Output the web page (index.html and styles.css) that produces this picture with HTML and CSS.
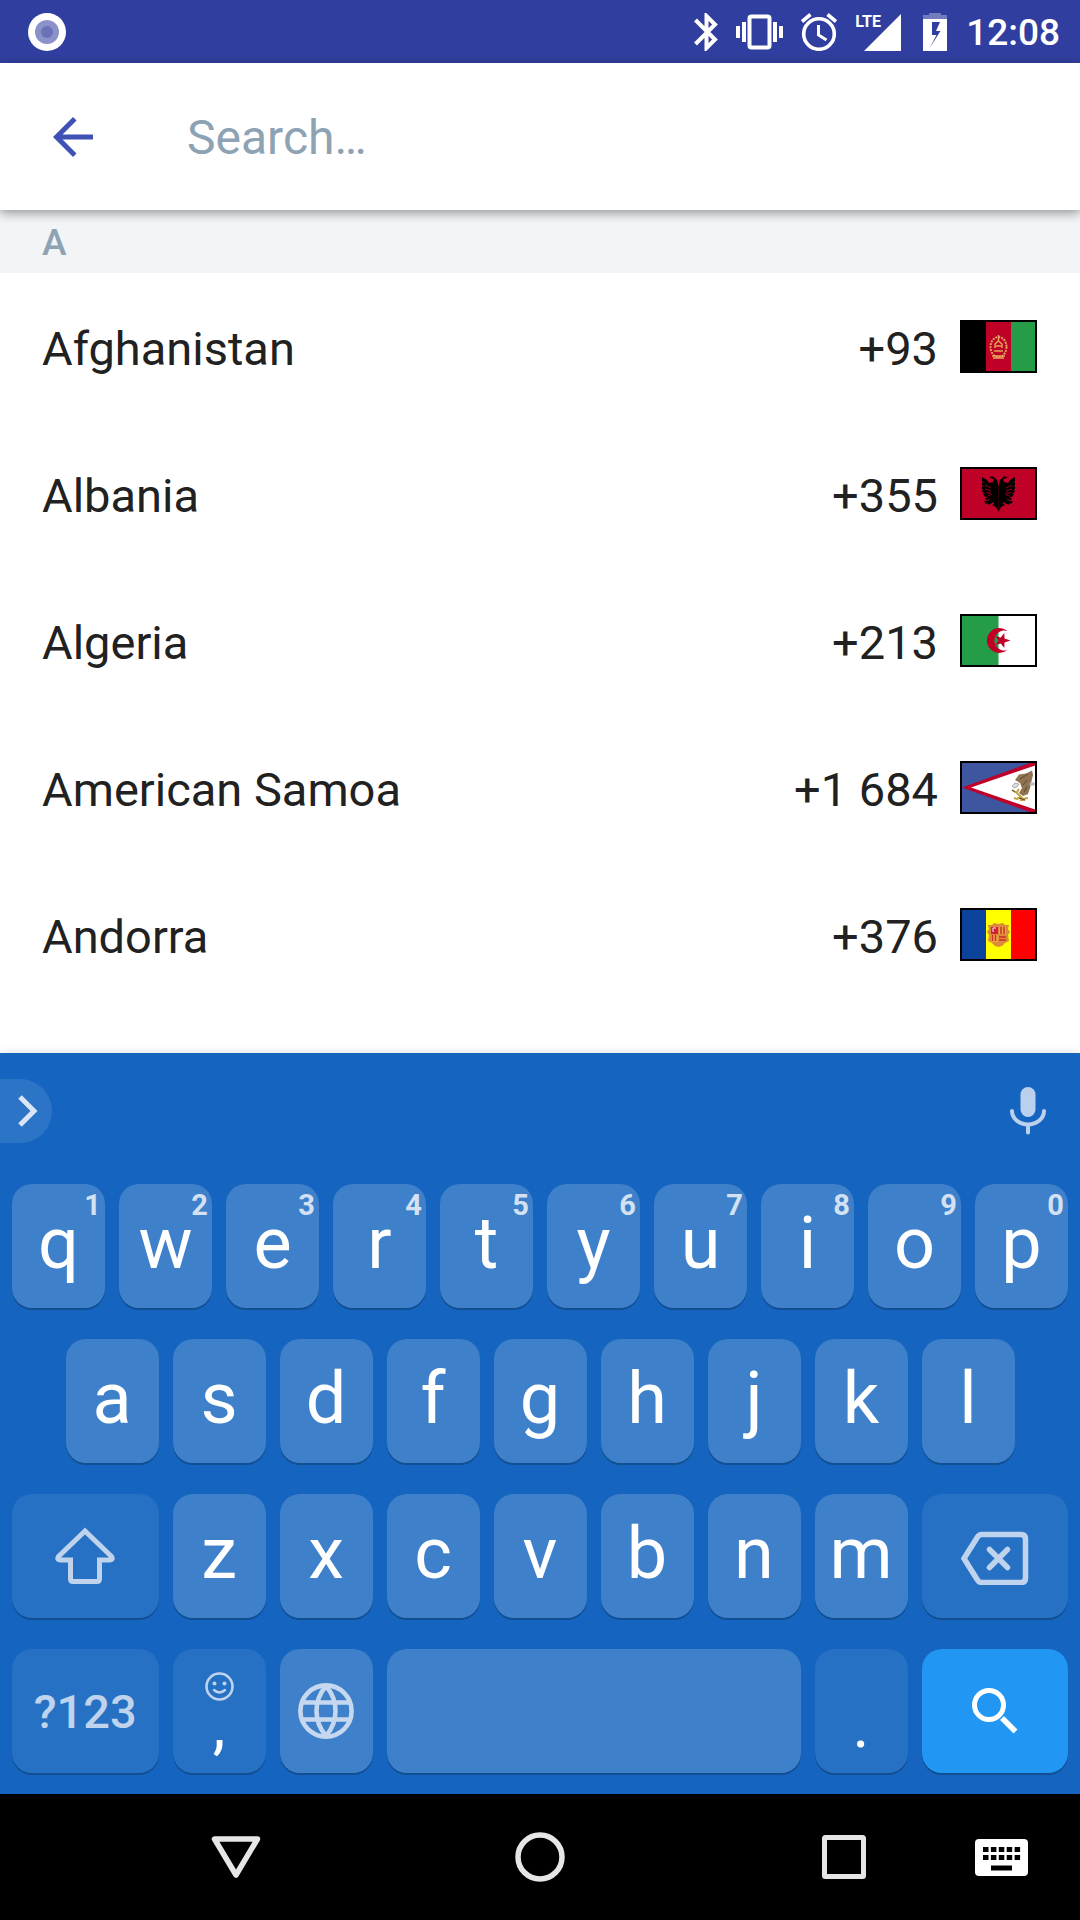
FILE: index.html
```html
<!DOCTYPE html>
<html lang="en">
<head>
<meta charset="utf-8">
<meta name="viewport" content="width=device-width, initial-scale=1">
<title>Choose a country</title>
<link rel="stylesheet" href="styles.css">
</head>
<body>
<header class="status">
  <svg class="status-app" viewBox="0 0 38 38" width="38" height="38" aria-hidden="true"><circle cx="19" cy="19" r="19" fill="#fff"/><circle cx="19" cy="19" r="12" fill="#8b92ca"/><circle cx="19" cy="19" r="6" fill="#6a72b8"/></svg>
  <div class="status-icons">
    <svg viewBox="0 0 24 38" width="24" height="38" aria-hidden="true"><path d="M1.500 7 21 26.500 12.500 35V3L21 11.500 1.500 31" fill="none" stroke="#fff" stroke-width="4"/></svg>
    <svg viewBox="0 0 47 38" width="47" height="38" fill="#fff" aria-hidden="true"><path d="M0 13h4v12H0zM6 9h4v20H6zM37 9h4v20h-4zM43 13h4v12h-4z"/><rect x="13.500" y="3.500" width="20" height="31" rx="2" fill="none" stroke="#fff" stroke-width="4"/></svg>
    <svg viewBox="0 0 36 38" width="36" height="38" fill="none" stroke="#fff" aria-hidden="true"><circle cx="18" cy="21" r="15.300" stroke-width="3.600"/><path d="M17.500 12v10l8 5" stroke-width="3"/><path d="M1 8.500 9.500 1.500M35 8.500 26.500 1.500" stroke-width="3.600"/></svg>
    <div class="signal"><span class="signal-type">LTE</span>
      <svg viewBox="0 0 46 38" width="46" height="38" aria-hidden="true"><path d="M46 1v37H9z" fill="#fff"/></svg>
    </div>
    <svg viewBox="0 0 29 38" width="29" height="38" aria-hidden="true"><path d="M4 6V2h6V0h12v2h6v4z" fill="#737cbd"/><path d="M4 6h24v32H4zM13 9v13h4.500L11 34.500 21.500 18H17l4-9z" fill="#fff" fill-rule="evenodd"/></svg>
    <time class="clock">12:08</time>
  </div>
</header>

<form class="searchbar" role="search">
  <button class="back" type="button" aria-label="Back"><svg viewBox="0 0 24 24" width="60" height="60"><path d="M20 11H7.830l5.590-5.590L12 4l-8 8 8 8 1.410-1.410L7.830 13H20z" fill="#3f51b5"/></svg></button>
  <input class="search" type="text" placeholder="Search…" aria-label="Search countries">
</form>

<main class="countries">
  <h2 class="letter">A</h2>
  <ul class="list">
    <li><button class="country" type="button"><span class="name">Afghanistan</span><span class="code">+93</span>
      <svg class="flag" viewBox="0 0 77 53"><path d="M0 0h77v53H0z"/><path d="M26 2h25v49H26z" fill="#bf0027"/><path d="M51 2h24v49H51z" fill="#259d48"/><g fill="none" stroke="#e5a25a" stroke-width="2"><ellipse cx="38.500" cy="27" rx="8" ry="10" stroke-dasharray="2 1"/><path d="M32 36h13M33 38h11M34 31h9M35 28v-4l3.500-3 3.500 3v4M38.500 15v6M36 26h5" stroke-width="1.500"/></g></svg></button></li>
    <li><button class="country" type="button"><span class="name">Albania</span><span class="code">+355</span>
      <svg class="flag" viewBox="0 0 77 53"><path d="M0 0h77v53H0z"/><path d="M2 2h73v49H2z" fill="#bf0027"/><path id="half-eagle" d="M38.500 19 37 13 33 9.500 29 10 34 12.500 33 15 29 16 27 13 22 10 22 14 25 16 22 15 22 18 25 20 22 19 22 22 25 24 22 23 23 26 26 27 23 27 25 30 28 29.500 25 32 27 33.500 31 31 28 34 24 34 26 37 28 36 28 38 31 36.500 34 35 34 37 32 38 36 40 38.500 45z"/><use href="#half-eagle" transform="matrix(-1 0 0 1 77 0)"/><path d="M25 18l6 3M25 22l6 2M26 26l5 0M28 29l4-2M52 18l-6 3M52 22l-6 2M51 26l-5 0M49 29l-4-2" stroke="#bf0027" stroke-width=".8"/></svg></button></li>
    <li><button class="country" type="button"><span class="name">Algeria</span><span class="code">+213</span>
      <svg class="flag" viewBox="0 0 77 53"><path d="M0 0h77v53H0z"/><path d="M2 2h37v49H2z" fill="#259d48"/><path d="M38.500 2H75v49H38.500z" fill="#fff"/><path d="M47.500 17A12.500 12.500 0 1 0 47.500 36A10 10 0 1 1 47.500 17z" fill="#c00028"/><path d="M50.500 26.500l-6 2-.2 5.500-3.500-4.500-5.500 1.500L38.500 26.500l-3.200-4.500 5.500 1.500 3.500-4.500 .2 5.500z" fill="#c00028"/></svg></button></li>
    <li><button class="country" type="button"><span class="name">American Samoa</span><span class="code">+1 684</span>
      <svg class="flag" viewBox="0 0 77 53"><path d="M0 0h77v53H0z"/><path d="M2 2h73v49H2z" fill="#3d569f"/><path d="M2 26.500 70 2h5v49h-5z" fill="#c00028"/><path d="M11 26.500 75 4.500v44z" fill="#fff"/><path d="M72 9.500 66 12.500 59 13.500 55 19 60 22 62 27 59 32 63 35 68 33 70 27 71.500 20 73 14z" fill="#8f7350"/><path d="M55 22l-3 3 2 2 3-1 2-3zM70 22h4v2h-4z" fill="#ddd" stroke="#aaa"/><path d="M52 29l5 3 4 4-4 2-3-1M57 31l2-3M60 35l3 3 5-1M60 39l5 0" fill="none" stroke="#c3a244" stroke-width="2"/><path d="M60 18l8-5M63 24l4-5M52 29l3 2M59 37l6 2M64 31l3-5" stroke="#55493a" fill="none"/></svg></button></li>
    <li><button class="country" type="button"><span class="name">Andorra</span><span class="code">+376</span>
      <svg class="flag" viewBox="0 0 77 53"><path d="M0 0h77v53H0z"/><path d="M2 2h24v49H2z" fill="#0b429b"/><path d="M26 2h25v49H26z" fill="#ff0"/><path d="M51 2h24v49H51z" fill="#f00"/><path d="M28 17 32 17 34 15 38.500 16 43 15 45 17 49 17 48 21 50 24 48 27 49 33 45 35 42 38 38.500 39 35 38 32 35 28 33 29 27 27 24 29 21z" fill="#dc8a3c"/><path d="M31 19h7v7h-7z" fill="#d0203a"/><path d="M39 19h7v7h-7zM31 27h7v7h-7z" fill="#eda648"/><path d="M41 19v7M44 19v7M32.500 27v6M35.500 27v6M39 29h7M39 32h7" stroke="#c92f25" stroke-width="1.500"/><path d="M33 24v-4h3" stroke="#eee" fill="none"/></svg></button></li>
  </ul>
</main>

<section class="keyboard" aria-label="Keyboard">
  <div class="strip">
    <button class="expand" type="button" aria-label="More"><svg viewBox="0 0 52 64" width="52" height="64"><path d="M20 18 34 32 20 46" fill="none" stroke="#dae6f5" stroke-width="5"/></svg></button>
    <button class="mic" type="button" aria-label="Voice input"><svg viewBox="0 0 36 48" width="36" height="48"><rect x="10.500" y="0" width="15" height="30" rx="7.500" fill="#bbd0ec"/><path d="M2 24a16 13.500 0 0 0 32 0M18 38v7.500" fill="none" stroke="#bbd0ec" stroke-width="4" stroke-linecap="round"/></svg></button>
  </div>
  <div class="keys">
    <button class="key" type="button">q<span class="hint">1</span></button>
    <button class="key" type="button">w<span class="hint">2</span></button>
    <button class="key" type="button">e<span class="hint">3</span></button>
    <button class="key" type="button">r<span class="hint">4</span></button>
    <button class="key" type="button">t<span class="hint">5</span></button>
    <button class="key" type="button">y<span class="hint">6</span></button>
    <button class="key" type="button">u<span class="hint">7</span></button>
    <button class="key" type="button">i<span class="hint">8</span></button>
    <button class="key" type="button">o<span class="hint">9</span></button>
    <button class="key" type="button">p<span class="hint">0</span></button>
    <button class="key key-indent" type="button">a</button>
    <button class="key" type="button">s</button>
    <button class="key" type="button">d</button>
    <button class="key" type="button">f</button>
    <button class="key" type="button">g</button>
    <button class="key" type="button">h</button>
    <button class="key" type="button">j</button>
    <button class="key" type="button">k</button>
    <button class="key" type="button">l</button>
    <button class="key key-wide key-dim key-icon key-newline" type="button" aria-label="Shift"><svg viewBox="0 0 60 58" width="60" height="58"><path d="M30 4 3.500 29.500Q1.500 33 5 33H15.500V52Q15.500 54.500 18 54.500H42Q44.500 54.500 44.500 52V33H55Q58.500 33 56.500 29.500z" fill="none" stroke="#bfd3ed" stroke-width="5"/></svg></button>
    <button class="key" type="button">z</button>
    <button class="key" type="button">x</button>
    <button class="key" type="button">c</button>
    <button class="key" type="button">v</button>
    <button class="key" type="button">b</button>
    <button class="key" type="button">n</button>
    <button class="key" type="button">m</button>
    <button class="key key-wide key-dim key-icon" type="button" aria-label="Backspace"><svg viewBox="0 -5 68 58" width="68" height="58"><path d="M21 2.500H60Q64.500 2.500 64.500 7V46Q64.500 50.500 60 50.500H21Q18 50.500 16.500 48L3 26.500 16.500 5Q18 2.500 21 2.500z" fill="none" stroke="#bfd3ed" stroke-width="5.500"/><path d="M28.500 17.500 46.500 35.500M46.500 17.500 28.500 35.500" stroke="#bfd3ed" stroke-width="5.500" stroke-linecap="round"/></svg></button>
    <button class="key key-wide key-dim key-mode" type="button">?123</button>
    <button class="key key-dim key-stack" type="button"><svg viewBox="0 0 29 29" width="29" height="29" aria-hidden="true"><circle cx="14.500" cy="14.500" r="13" fill="none" stroke="#bfd3ed" stroke-width="2.600"/><circle cx="9.500" cy="11.500" r="2" fill="#bfd3ed"/><circle cx="19.500" cy="11.500" r="2" fill="#bfd3ed"/><path d="M9 18q5.500 5 11 0" fill="none" stroke="#bfd3ed" stroke-width="2.400" stroke-linecap="round"/></svg><span class="mark">,</span></button>
    <button class="key key-icon" type="button" aria-label="Change language"><svg viewBox="0 0 56 56" width="56" height="56" fill="none" stroke="#c5d8ef" stroke-width="4.600"><circle cx="28" cy="28" r="25.600"/><path d="M5 19.500H51M5 36.500H51M28 3Q18.500 14 18.500 28T28 53Q37.500 42 37.500 28T28 3z"/></svg></button>
    <button class="key key-space" type="button" aria-label="Space"></button>
    <button class="key key-dim key-stack" type="button"><span class="mark">.</span></button>
    <button class="key key-wide key-icon key-go" type="button" aria-label="Search"><svg viewBox="0 0 46 46" width="46" height="46"><circle cx="17" cy="17" r="14.500" fill="none" stroke="#fff" stroke-width="5"/><path d="M30 30 43.500 43.500" stroke="#fff" stroke-width="5.500"/></svg></button>
  </div>
</section>

<nav class="navbar">
  <button class="nav nav-back" type="button" aria-label="Back"><svg viewBox="0 0 50 50" width="50" height="50"><path d="M3.500 7H46.500L25 43z" fill="none" stroke="#e6e6e6" stroke-width="5.500" stroke-linejoin="round"/></svg></button>
  <button class="nav nav-home" type="button" aria-label="Home"><svg viewBox="0 0 50 50" width="50" height="50"><circle cx="25" cy="25" r="22" fill="none" stroke="#e6e6e6" stroke-width="5.500"/></svg></button>
  <button class="nav nav-recent" type="button" aria-label="Recent apps"><svg viewBox="0 0 50 50" width="50" height="50"><rect x="5.500" y="5.500" width="39" height="39" rx="1" fill="none" stroke="#e6e6e6" stroke-width="5"/></svg></button>
  <button class="nav nav-ime" type="button" aria-label="Choose keyboard"><svg viewBox="0 0 53 37" width="53" height="37"><rect width="53" height="37" rx="4" fill="#fff"/><path d="M8 10.500H46M8 18.500H46" stroke="#000" stroke-width="5" stroke-dasharray="5.500 2.400"/><path d="M16 29H37" stroke="#000" stroke-width="5"/></svg></button>
</nav>
</body>
</html>
```
FILE: styles.css
```css
* { box-sizing: border-box; }

body {
  margin: 0;
  min-height: 100vh;
  display: flex;
  flex-direction: column;
  background: #fff;
  color: #212121;
  font-family: Roboto, "Noto Sans", sans-serif;
  font-size: 47px;
}

button, input {
  margin: 0;
  padding: 0;
  border: 0;
  background: none;
  color: inherit;
  font: inherit;
}

svg {
  display: block;
  flex-shrink: 0;
}

/* Status bar */
.status {
  display: flex;
  justify-content: space-between;
  align-items: center;
  height: 63px;
  padding: 0 20px 0 28px;
  background: #303f9f;
  color: #fff;
}
.status-icons {
  display: flex;
  align-items: center;
  gap: 18px;
}
.signal { position: relative; }
.signal-type {
  position: absolute;
  left: 0;
  top: 0;
  font: bold 16px/18px Roboto, sans-serif;
}
.clock {
  padding-top: 2px;
  font-size: 37px;
  font-weight: 500;
  line-height: 44px;
}

/* Search bar */
.searchbar {
  position: relative;
  z-index: 1;
  display: flex;
  align-items: center;
  gap: 84px;
  height: 147px;
  padding: 0 43px;
  background: #fff;
  box-shadow: 0 3px 10px rgba(0, 0, 0, .4);
}
.search {
  flex: 1;
  min-width: 0;
  height: 100%;
  padding-top: 2px;
  outline: 0;
  font-size: 48px;
}
.search::placeholder {
  color: #8da2b3;
  opacity: 1;
}

/* Country list */
.countries { flex: 1; }
.letter {
  margin: 0;
  padding: 2px 42px 0;
  background: #f2f4f6;
  color: #8da2b3;
  font-size: 37px;
  font-weight: 500;
  line-height: 61px;
}
.list {
  margin: 0;
  padding: 0;
  list-style: none;
}
.country {
  display: flex;
  align-items: center;
  gap: 22px;
  width: 100%;
  height: 147px;
  padding: 0 43px 0 42px;
  text-align: left;
}
.name { flex: 1; }
.name, .code { padding-top: 3px; }
.flag {
  width: 77px;
  height: 53px;
}

/* Keyboard */
.keyboard {
  position: relative;
  padding: 26px 0 21px;
  background: #1565c0;
  box-shadow: 0 0 10px rgba(0, 0, 0, .12);
  color: #fff;
}
.strip {
  display: flex;
  justify-content: space-between;
  align-items: center;
  padding-right: 34px;
  margin-bottom: 41px;
}
.expand {
  border-radius: 0 32px 32px 0;
  background: #2c74c6;
}
.keys {
  display: grid;
  grid-template-columns: repeat(20, 1fr);
  grid-auto-rows: 124px;
  gap: 31px 14px;
  padding: 0 12px;
}
.key {
  position: relative;
  grid-column: span 2;
  min-width: 0;
  padding-bottom: 4px;
  border-radius: 20px;
  background: #3f80ca;
  box-shadow: 0 2px 0 #114e92;
  font-size: 72px;
  line-height: 84px;
}
.key-indent { grid-column: 2 / span 2; }
.key-wide { grid-column: span 3; }
.key-newline { grid-column: 1 / span 3; }
.key-space { grid-column: span 8; }
.key-dim { background: #2671c4; }
.key-go { background: #2196f3; }
.key-icon {
  display: flex;
  align-items: center;
  justify-content: center;
  padding: 0;
}
.key-mode {
  padding: 2px 0 0;
  color: #bfd3ed;
  font-size: 47px;
  font-weight: 500;
}
.key-stack {
  display: flex;
  flex-direction: column;
  align-items: center;
  justify-content: space-between;
  padding: 23px 0 23px;
}
.mark {
  margin-top: auto;
  font-size: 64px;
  line-height: 48px;
}
.hint {
  position: absolute;
  top: 4px;
  right: 4px;
  color: #d3e1f3;
  font-size: 29px;
  font-weight: bold;
  line-height: 34px;
}

/* Navigation bar */
.navbar {
  display: grid;
  grid-template-columns: 158fr 156fr 148fr 156fr 148fr 156fr 158fr;
  height: 126px;
  background: #000;
}
.nav {
  display: flex;
  align-items: center;
  justify-content: center;
}
.nav-back { grid-column: 2; }
.nav-home { grid-column: 4; }
.nav-recent { grid-column: 6; }
.nav-ime { grid-column: 7; }
```
